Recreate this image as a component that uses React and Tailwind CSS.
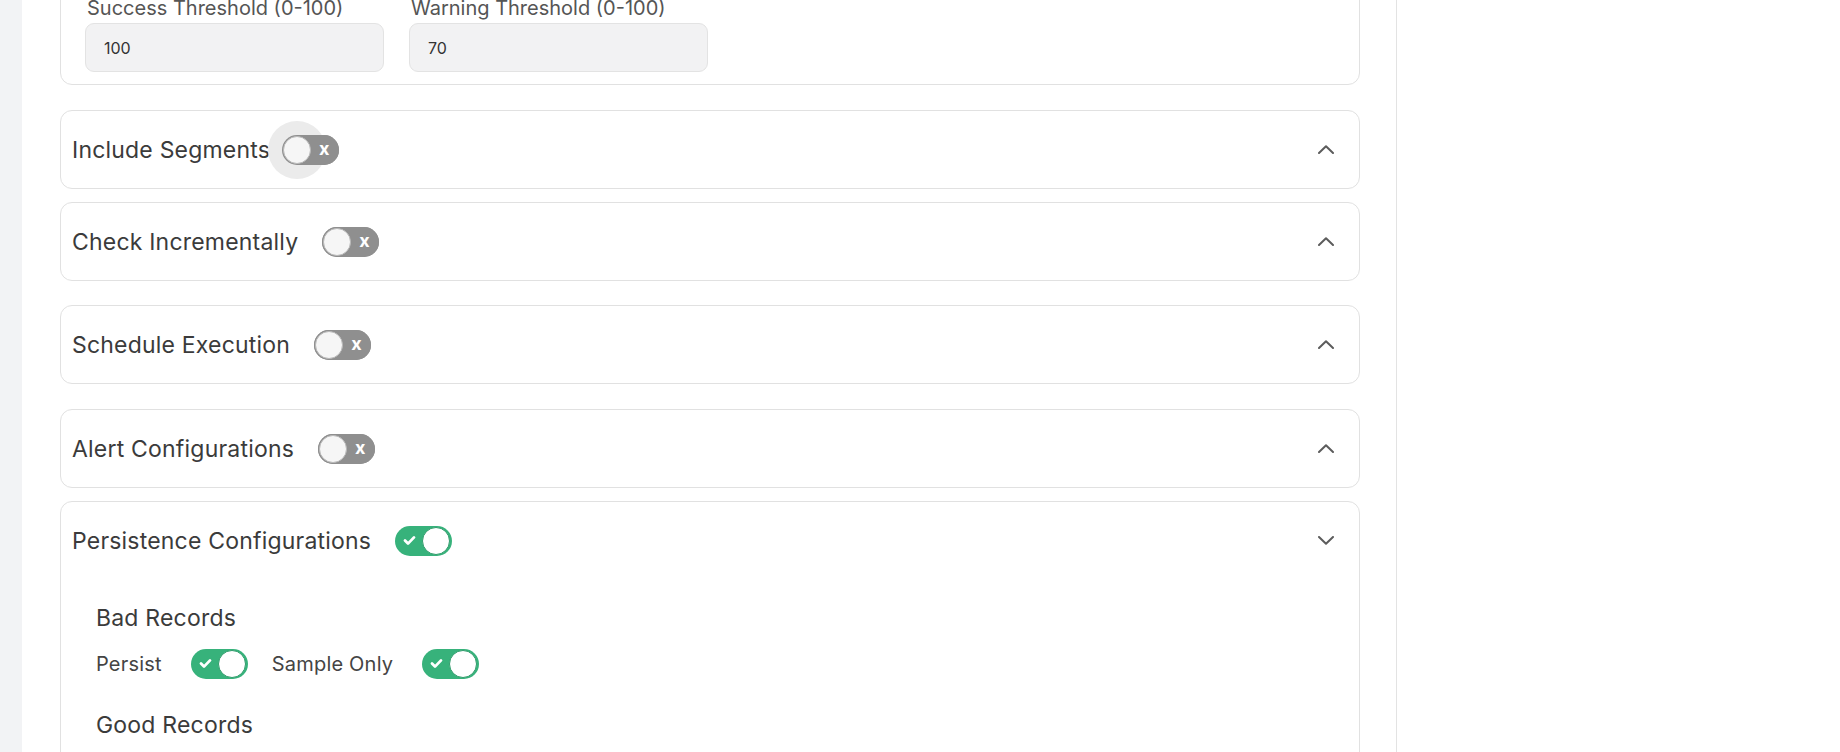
import React from 'react';

const Chevron = ({ up = true }) => (
  <svg width="16" height="9" viewBox="0 0 16 9" fill="none">
    <polyline
      points={up ? '1,8 8,1.2 15,8' : '1,1 8,7.8 15,1'}
      stroke="#5c5c5c"
      strokeWidth="2"
      strokeLinecap="round"
      strokeLinejoin="round"
    />
  </svg>
);

const Toggle = ({ on = false, halo = false }) => {
  if (on) {
    return (
      <span className="relative flex h-[30px] w-[57px] shrink-0 items-center rounded-full bg-[#37b27b]">
        <svg className="absolute left-[8px] top-[9px]" width="13" height="11" viewBox="0 0 13 11" fill="none">
          <polyline points="2,5.6 5,8.6 11,2.4" stroke="#fff" strokeWidth="2.8" strokeLinecap="round" strokeLinejoin="round" />
        </svg>
        <span className="absolute right-[2px] top-[1px] h-[28px] w-[28px] rounded-full border border-[#2f9c6b] bg-white" />
      </span>
    );
  }
  return (
    <span className="relative flex h-[30px] w-[57px] shrink-0 items-center rounded-full bg-[#8f8f8f]">
      {halo && <span className="absolute -left-[14px] -top-[14px] h-[58px] w-[58px] rounded-full bg-[#ebebeb]" />}
      <span className="absolute inset-0 rounded-full bg-[#8f8f8f]" />
      <span className="absolute left-[1px] top-[1px] h-[28px] w-[28px] rounded-full border border-[#b9b9b9] bg-[#f6f6f6]" />
      <span className="absolute left-[37px] top-[3px] text-[18px] font-bold leading-[22px] text-white">x</span>
    </span>
  );
};

const Section = ({ title, on, halo, gap = 'ml-6', up = true, className = '', children }) => (
  <div className={`rounded-[12px] border border-[#e1e1e1] bg-white ${className}`}>
    <div className="flex h-[77px] items-center pl-[11px] pr-[25px]">
      <span className="text-[23px] leading-[32px] tracking-[0.2px] text-[#3b3b3b]">{title}</span>
      <span className={`flex items-center ${gap}`}>
        <Toggle on={on} halo={halo} />
      </span>
      <span className="ml-auto flex items-center">
        <Chevron up={up} />
      </span>
    </div>
    {children}
  </div>
);

const SwitchRow = ({ items }) => (
  <div className="flex items-center">
    {items.map((label, i) => (
      <div key={label} className={`flex items-center ${i > 0 ? 'ml-6' : ''}`}>
        <span className="text-[20px] leading-[30px] tracking-[0.2px] text-[#444]">{label}</span>
        <span className="ml-[29px] flex items-center">
          <Toggle on />
        </span>
      </div>
    ))}
  </div>
);

export default function App() {
  return (
    <div className="flex h-[752px] w-[1840px] overflow-hidden bg-white font-['Inter',sans-serif]">
      <div className="w-[22px] shrink-0 bg-[#f2f3f5]" />
      <div className="w-[1375px] shrink-0 border-r border-[#e3e3e3] pl-[38px] pr-[36px]">
        <div className="-mt-[30px] rounded-[12px] border border-[#e1e1e1] bg-white px-[24px] pt-[25px] pb-[12px]">
          <div className="flex gap-[25px]">
            {[
              ['Success Threshold (0-100)', '100'],
              ['Warning Threshold (0-100)', '70'],
            ].map(([label, value]) => (
              <div key={label} className="w-[299px]">
                <div className="mb-[3px] pl-[2px] text-[20px] leading-[24px] text-[#555]">{label}</div>
                <div className="flex h-[49px] items-center rounded-[9px] border border-[#e3e3e3] bg-[#f2f2f3] pl-[18px] text-[16px] text-[#333]">
                  {value}
                </div>
              </div>
            ))}
          </div>
        </div>

        <Section title="Include Segments" halo gap="ml-3" className="mt-[25px]" />
        <Section title="Check Incrementally" className="mt-[13px]" />
        <Section title="Schedule Execution" className="mt-[24px]" />
        <Section title="Alert Configurations" className="mt-[25px]" />
        <Section title="Persistence Configurations" on up={false} className="mt-[13px]">
          <div className="pl-[35px] pt-[23px] pb-8">
            <div className="text-[23px] leading-[32px] tracking-[0.2px] text-[#3b3b3b]">Bad Records</div>
            <div className="mt-[15px]">
              <SwitchRow items={['Persist', 'Sample Only']} />
            </div>
            <div className="mt-[30px] text-[23px] leading-[32px] tracking-[0.2px] text-[#3b3b3b]">Good Records</div>
            <div className="mt-[15px]">
              <SwitchRow items={['Persist', 'Sample Only']} />
            </div>
          </div>
        </Section>
      </div>
      <div className="flex-1 bg-white" />
    </div>
  );
}
